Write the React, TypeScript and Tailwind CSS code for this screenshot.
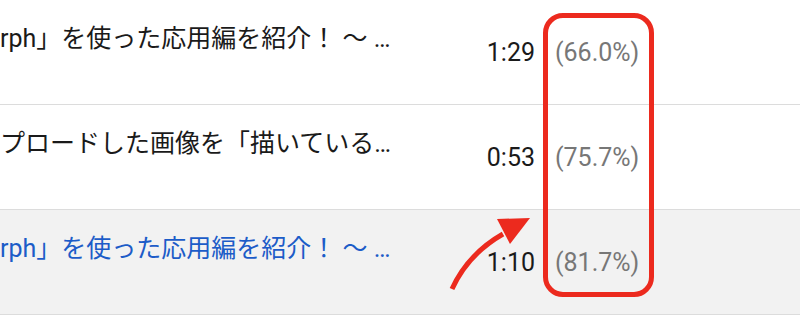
const rows = [
  { title: "rph」を使った応用編を紹介！ ～ …", time: "1:29", pct: "(66.0%)", active: false },
  { title: "プロードした画像を「描いている…", time: "0:53", pct: "(75.7%)", active: false },
  { title: "rph」を使った応用編を紹介！ ～ …", time: "1:10", pct: "(81.7%)", active: true },
]

export default function App() {
  return (
    <div className="relative w-[800px] h-[315px] overflow-hidden bg-white font-['Roboto','Noto_Sans_CJK_JP',sans-serif]">
      {rows.map((row, i) => (
        <div
          key={i}
          className={`flex h-[105px] border-b border-[#dcdcdc] ${row.active ? "bg-[#f2f2f2]" : "bg-white"}`}
        >
          <div
            className={`w-[400px] pt-[23px] text-[25px] leading-[32px] whitespace-nowrap overflow-hidden ${
              row.active ? "text-[#1c5cc8]" : "text-[#1a1a1a]"
            }`}
          >
            {row.title}
          </div>
          <div className="w-[135px] pt-[37px] text-right text-[25px] leading-[32px] text-[#1a1a1a]">
            {row.time}
          </div>
          <div className="pl-[20px] pt-[37px] text-[25px] leading-[32px] text-[#777]">{row.pct}</div>
        </div>
      ))}

      {/* 注釈：赤い枠 */}
      <div className="absolute left-[543px] top-[13px] w-[111px] h-[284px] border-[5px] border-[#ec2a1e] rounded-[20px]" />

      {/* 注釈：矢印 */}
      <svg className="absolute left-0 top-0" width="800" height="315" viewBox="0 0 800 315">
        <path d="M452 289 Q468 254 503 234" fill="none" stroke="#ec2a1e" strokeWidth="5" strokeLinecap="butt" />
        <polygon points="497,219 530,218 510,244" fill="#ec2a1e" />
      </svg>
    </div>
  )
}
